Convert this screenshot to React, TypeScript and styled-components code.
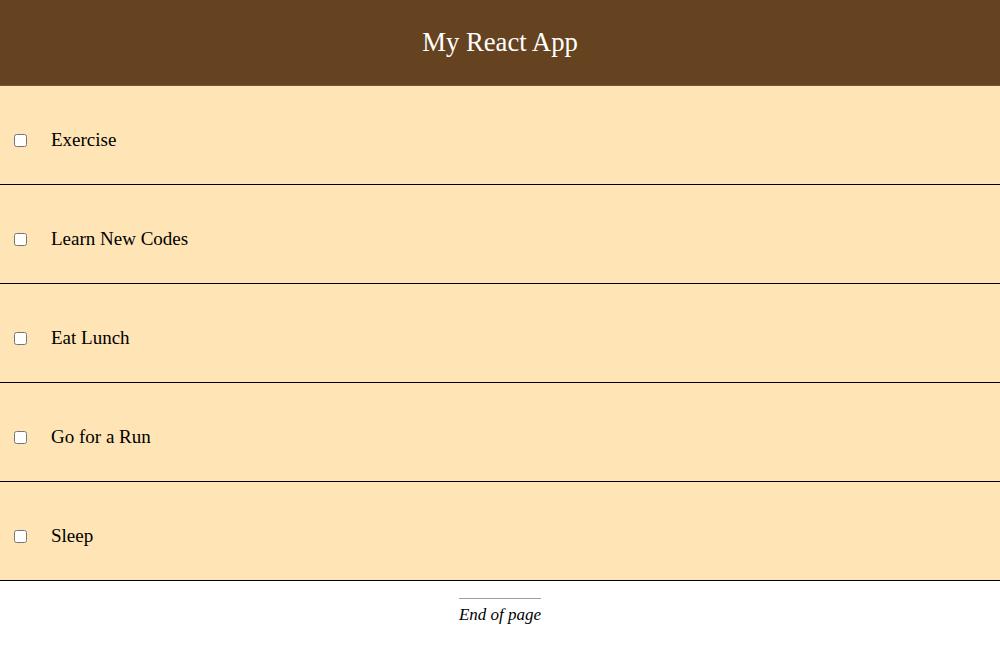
import React, { useState } from "react";
import styled, { createGlobalStyle } from "styled-components";

const GlobalStyle = createGlobalStyle`
  html, body {
    margin: 0;
    padding: 0;
    background: #ffffff;
    font-family: "Liberation Serif", "Times New Roman", serif;
  }
`;

const Header = styled.header`
  height: 86px;
  background: #654321;
  display: flex;
  align-items: center;
  justify-content: center;
  box-sizing: border-box;
  border-bottom: 1px solid #7a5530;
`;

const Title = styled.h1`
  margin: 0;
  color: #ffffff;
  font-size: 26.7px;
  font-weight: normal;
`;

const List = styled.div`
  display: flex;
  flex-direction: column;
`;

const Item = styled.div`
  height: 99px;
  box-sizing: border-box;
  background: #ffe4b5;
  border-bottom: 1px solid #000000;
  display: flex;
  align-items: center;
  padding: 10px 0 0 10px;
`;

const Check = styled.input`
  width: 13px;
  height: 13px;
  margin: 3px 3px 3px 4px;
`;

const Label = styled.span`
  margin-left: 21px;
  font-size: 19px;
  color: #000000;
`;

const Footer = styled.footer`
  display: flex;
  flex-direction: column;
  align-items: center;
  padding-top: 17px;
`;

const Rule = styled.div`
  width: 82px;
  height: 1px;
  background: #a0a0a0;
`;

const EndText = styled.p`
  margin: 6px 0 0;
  font-style: italic;
  font-size: 17px;
  color: #000000;
`;

const tasks = ["Exercise", "Learn New Codes", "Eat Lunch", "Go for a Run", "Sleep"];

export default function App() {
  const [done, setDone] = useState<boolean[]>(tasks.map(() => false));
  return (
    <>
      <GlobalStyle />
      <Header>
        <Title>My React App</Title>
      </Header>
      <List>
        {tasks.map((t, i) => (
          <Item key={t}>
            <Check
              type="checkbox"
              checked={done[i]}
              onChange={() => setDone(done.map((d, j) => (j === i ? !d : d)))}
            />
            <Label>{t}</Label>
          </Item>
        ))}
      </List>
      <Footer>
        <Rule />
        <EndText>End of page</EndText>
      </Footer>
    </>
  );
}
